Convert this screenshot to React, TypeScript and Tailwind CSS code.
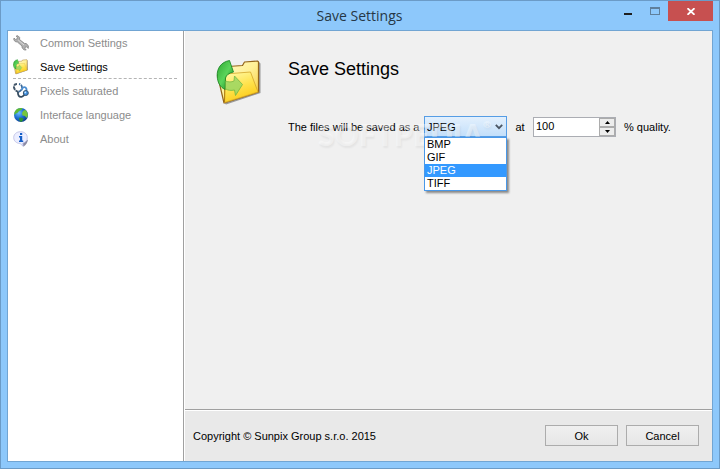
import React, { useState } from 'react';

const FORMATS = ['BMP', 'GIF', 'JPEG', 'TIFF'];

function WrenchIcon() {
  return (
    <svg width="16" height="16" viewBox="0 0 16 16">
      <path
        d="M3.2 1 5 .8 6.6 2.4 6.6 4.6 11.4 8.4 13.4 8.6 15.4 11 15.2 13.4 13.6 11.8 12.2 12.2 12 13.6 13.2 15 11 14.8 9.2 13 9 11 4.4 7 2.2 6.6.8 4.8 1 3 2.4 4.4 3.8 4.2 4.4 2.6Z"
        fill="#b0b0b0"
        stroke="#8a8a8a"
        strokeWidth=".9"
        strokeLinejoin="round"
      />
      <path d="M5.2 5 11 10" stroke="#dcdcdc" strokeWidth="1" />
    </svg>
  );
}

function FolderIcon({ className }: { className: string }) {
  return (
    <svg className={className} viewBox="0 0 48 48">
      <defs>
        <linearGradient id="folderFront" x1=".2" y1="0" x2=".6" y2="1">
          <stop offset="0" stopColor="#fff8a0" />
          <stop offset=".5" stopColor="#ffe24c" />
          <stop offset="1" stopColor="#fcc810" />
        </linearGradient>
        <linearGradient id="folderBack" x1="0" y1="0" x2="1" y2="1">
          <stop offset="0" stopColor="#fffbd0" />
          <stop offset=".5" stopColor="#fff096" />
          <stop offset="1" stopColor="#f5c52c" />
        </linearGradient>
        <linearGradient id="arrowGreen" x1="0" y1="0" x2="1" y2="1">
          <stop offset="0" stopColor="#2da832" />
          <stop offset=".5" stopColor="#5bd45a" />
          <stop offset="1" stopColor="#0c7d1b" />
        </linearGradient>
      </defs>
      <path d="m43 3 1.500 1.500V34L10 45.500 8 44l34-11Z" fill="#444" opacity=".5" />
      <path
        d="M12 7.500 26.500 6.500 28.500 3 41.500 2 42.500 3V33L8 44 1.500 16Z"
        fill="url(#folderBack)"
        stroke="#94651a"
        strokeWidth="1.200"
        strokeLinejoin="round"
      />
      <path d="M9 15 34.500 13 42 33 8.500 43.500Z" fill="url(#folderFront)" stroke="#d3a62a" strokeWidth=".8" />
      <path d="M8.500 43.500 9 18" stroke="#b07b12" strokeWidth="1" />
      <path
        d="M13.500 1.500C5 3 .8 9.500 1.200 17c.3 7 3.300 11.500 8 13.500l.3-11.500c.8-3 3.500-5 8-6Z"
        fill="url(#arrowGreen)"
        stroke="#13821f"
        strokeWidth=".8"
      />
      <path
        d="M9.500 22c3 1.200 6 1.200 8.500 0l.5-5L26.500 25.500 19.500 36.500 18.500 31c-3.500.8-6.500.5-9-1.200Z"
        fill="#a0d863"
        stroke="#67b33f"
        strokeWidth=".8"
        opacity=".9"
      />
    </svg>
  );
}

function StethoscopeIcon() {
  return (
    <svg width="16" height="16" viewBox="0 0 16 16" fill="none">
      <path d="M4 1C1 1 .4 3.500 1.400 5.600c.8 1.700 2 2.700 4 3.200" stroke="#44586b" strokeWidth="2" strokeDasharray="3.500 .8" />
      <path d="M5.500 8.800C8.400 8 9.600 5.500 8.800 3.200 8.400 2 7.500 1.300 6 1" stroke="#3d6b9a" strokeWidth="1.800" strokeDasharray="4 .8" />
      <path d="M5 8.800C4.600 12 6 14.200 8.500 13.800c2-.3 2.500-1.800 4-2.800" stroke="#344b60" strokeWidth="1.800" />
      <path d="M8.800 7.200C9 4.500 11 3.600 12.600 4.600c1.200.9 1.200 2 .6 3.600" stroke="#4a8cd0" strokeWidth="1.800" />
      <circle cx="12.800" cy="10" r="2.500" fill="#3f8fe0" stroke="#39546e" />
      <circle cx="12.300" cy="9.400" r=".9" fill="#c8e6ff" />
    </svg>
  );
}

function GlobeIcon() {
  return (
    <svg width="16" height="16" viewBox="0 0 16 16">
      <defs>
        <radialGradient id="ocean" cx=".35" cy=".35" r=".75">
          <stop offset="0" stopColor="#6fc0ff" />
          <stop offset=".5" stopColor="#1d6fd2" />
          <stop offset="1" stopColor="#08367f" />
        </radialGradient>
      </defs>
      <circle cx="8" cy="8" r="7" fill="url(#ocean)" />
      <path d="M3 3C4.500 1.500 7 .8 9.500 1.200L8.500 3 6 4 5 5.500 3 6.500 1.500 8C1 6 1.600 4.500 3 3Z" fill="#5dbb35" />
      <path d="M10.500 3.500 12.500 3c1.800 1.800 2.500 3.500 2.400 5.500L13.500 11l-1.500-2-2.500-.5L9 6Z" fill="#76c63c" />
      <path d="m6.500 10.500 3 .5 1 1.200-2 2.800C6.800 14.800 6 13 6 12Z" fill="#2f9431" />
    </svg>
  );
}

function AboutIcon() {
  return (
    <svg width="16" height="16" viewBox="0 0 16 16">
      <path d="m9 12 6-3.500c-.2 2.500-1.500 5-4.500 7.200Z" fill="#8b8ba5" />
      <path
        d="M7.500.7c4 0 6.800 2.500 6.800 5.900 0 2.900-1.800 4.900-4.500 5.600l.3 3-3-2.700C3.300 12.300.7 9.900.7 6.600.7 3.200 3.500.7 7.500.7Z"
        fill="#eceeff"
        stroke="#b9bbe2"
        strokeWidth=".8"
      />
      <path d="M7 2h2.200v2H7ZM6 5h3.200v4.500h1V11H6V9.500h1v-3H6Z" fill="#155fc8" />
    </svg>
  );
}

const NAV_ITEMS = [
  { label: 'Common Settings', icon: <WrenchIcon /> },
  { label: 'Save Settings', icon: <FolderIcon className="h-4 w-4" /> },
  { label: 'Pixels saturated', icon: <StethoscopeIcon /> },
  { label: 'Interface language', icon: <GlobeIcon /> },
  { label: 'About', icon: <AboutIcon /> },
];

function TitleBar() {
  return (
    <header className="flex h-[29px] items-start">
      <div className="w-[104px]" />
      <h1 className="flex-1 pt-1 text-center font-['Open_Sans',sans-serif] text-sm leading-[22px] text-[#263746]">
        Save Settings
      </h1>
      <div className="flex">
        <button aria-label="Minimize" className="flex h-5 w-7 justify-center pt-3">
          <span className="h-[2px] w-2 bg-[#1e1e1e]" />
        </button>
        <button aria-label="Maximize" className="flex h-5 w-[26px] justify-center pt-[6px]">
          <span className="h-2 w-[10px] border border-t-2 border-[#5f7f9b]" />
        </button>
        <button aria-label="Close" className="mr-[6px] flex h-5 w-[45px] items-center justify-center bg-[#c75050]">
          <svg width="8" height="7" viewBox="0 0 8 7">
            <path d="m.5.2 7 6.600M7.500.2l-7 6.600" stroke="#fff" strokeWidth="1.800" />
          </svg>
        </button>
      </div>
    </header>
  );
}

function Sidebar() {
  const [active, setActive] = useState('Save Settings');

  return (
    <nav className="w-[176px] shrink-0 border-r border-[#a0a0a0] bg-white pl-[5px] pr-[6px]">
      {NAV_ITEMS.map(({ label, icon }) => (
        <button
          key={label}
          onClick={() => setActive(label)}
          className={`flex h-6 w-full items-center gap-[11px] border-b text-left ${
            active === label ? 'border-dashed border-[#b4b4b4] text-black' : 'border-transparent text-[#8c8c8c]'
          }`}
        >
          {icon}
          {label}
        </button>
      ))}
    </nav>
  );
}

function FormatSelect() {
  const [format, setFormat] = useState('JPEG');
  const [open, setOpen] = useState(true);

  return (
    <div className="relative w-[83px]">
      <select
        id="format"
        value={format}
        onChange={(e) => setFormat(e.target.value)}
        onMouseDown={(e) => {
          e.preventDefault();
          setOpen(!open);
        }}
        className="block h-[21px] w-full appearance-none border border-[#569de5] bg-linear-to-b from-[#e3f0fd] to-[#c3dffa] px-[2px]"
      >
        {FORMATS.map((f) => (
          <option key={f}>{f}</option>
        ))}
      </select>
      <svg className="pointer-events-none absolute right-1 top-2" width="8" height="6" viewBox="0 0 8 6">
        <path d="m.8.8 3.200 3.400L7.200.8" fill="none" stroke="#4b5663" strokeWidth="1.800" />
      </svg>
      {open && (
        <ul
          role="listbox"
          aria-label="File format"
          className="absolute left-0 top-[21px] z-10 w-full border border-[#4a98e8] bg-white shadow-[2px_2px_2px_#8a8a8a]"
        >
          {FORMATS.map((f) => (
            <li key={f} role="option" aria-selected={f === format}>
              <button
                onClick={() => {
                  setFormat(f);
                  setOpen(false);
                }}
                className={`block h-[13px] w-full px-[2px] text-left leading-[13px] ${
                  f === format ? 'bg-[#3399ff] text-white' : ''
                }`}
              >
                {f}
              </button>
            </li>
          ))}
        </ul>
      )}
    </div>
  );
}

function QualityInput() {
  const [quality, setQuality] = useState(100);

  return (
    <div className="flex h-5 w-[83px] border border-[#abadb3] bg-white">
      <input
        id="quality"
        type="text"
        value={quality}
        onChange={(e) => setQuality(Number(e.target.value) || 0)}
        className="min-w-0 flex-1 px-[2px] pb-[2px] outline-none"
      />
      <div className="flex w-4 flex-col">
        <button
          aria-label="Increase quality"
          onClick={() => setQuality(Math.min(100, quality + 1))}
          className="flex flex-1 items-center justify-center border border-[#acacac] bg-[#ededed]"
        >
          <svg width="5" height="3" viewBox="0 0 5 3">
            <path d="M2.500 0 5 3H0Z" />
          </svg>
        </button>
        <button
          aria-label="Decrease quality"
          onClick={() => setQuality(Math.max(0, quality - 1))}
          className="flex flex-1 items-center justify-center border border-[#acacac] bg-[#ededed]"
        >
          <svg width="5" height="3" viewBox="0 0 5 3">
            <path d="M0 0h5L2.500 3Z" />
          </svg>
        </button>
      </div>
    </div>
  );
}

function SavePanel() {
  return (
    <main className="flex flex-1 gap-6 bg-[#f0f0f0] pl-[31px] pt-7">
      <FolderIcon className="h-12 w-12 shrink-0" />
      <div>
        <h2 className="text-lg leading-5 text-black">Save Settings</h2>
        <div className="relative mt-[37px] flex items-center">
          <label htmlFor="format" className="w-[136px]">
            The files will be saved as a
          </label>
          <FormatSelect />
          <label htmlFor="quality" className="w-[26px] text-center">
            at
          </label>
          <QualityInput />
          <span className="pl-2">% quality.</span>
          <span
            aria-hidden="true"
            className="pointer-events-none absolute left-[30px] top-[2px] flex font-['Lato',sans-serif] text-3xl font-black leading-8 text-white/40 [text-shadow:1px_2px_2px_rgba(0,0,0,0.05)]"
          >
            SOFTPEDIA
            <span className="text-[10px] leading-3">®</span>
          </span>
        </div>
      </div>
    </main>
  );
}

function Footer() {
  return (
    <footer className="flex h-[52px] items-center gap-2 border-t border-[#a0a0a0] bg-[#e9e9e9] pl-2 pr-[13px] shadow-[inset_0_1px_0_#fff]">
      <p className="flex-1">Copyright © Sunpix Group s.r.o. 2015</p>
      <button className="h-[21px] w-[73px] border border-[#acacac] bg-linear-to-b from-[#f0f0f0] to-[#e6e6e6]">Ok</button>
      <button className="h-[21px] w-[73px] border border-[#acacac] bg-linear-to-b from-[#f0f0f0] to-[#e6e6e6]">
        Cancel
      </button>
    </footer>
  );
}

export default function App() {
  return (
    <div className="flex min-h-screen flex-col border border-[#6b9bc7] bg-[#8dc8fb] font-['Liberation_Sans',sans-serif] text-[11px] leading-4 text-black">
      <TitleBar />
      <div className="mx-[6px] mb-[6px] flex flex-1 border border-[#71a5d3]">
        <Sidebar />
        <div className="flex flex-1 flex-col border-l border-white">
          <SavePanel />
          <Footer />
        </div>
      </div>
    </div>
  );
}
